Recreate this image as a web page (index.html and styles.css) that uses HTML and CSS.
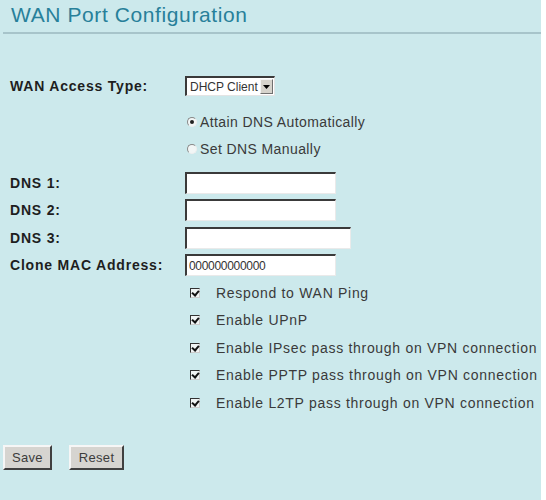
FILE: index.html
```html
<!DOCTYPE html>
<html lang="en">
<head>
    <meta charset="UTF-8">
    <meta name="viewport" content="width=device-width, initial-scale=1.0">
    <title>WAN Port Configuration</title>
    <link rel="stylesheet" href="styles.css">
</head>
<body>

<div class="panel">
    <h1>WAN Port Configuration</h1>

    <form class="wan-form" onsubmit="return false;">
        <div class="row row-type">
            <label class="label">WAN Access Type:</label>
            <div class="select-box">
                <span class="select-text">DHCP Client</span>
                <span class="select-arrow">
                    <svg width="7" height="4" viewBox="0 0 7 4"><path d="M0 0h7L3.5 4z" fill="#000"/></svg>
                </span>
            </div>
        </div>

        <div class="row">
            <span></span>
            <span class="option"><span class="radio checked"></span>Attain DNS Automatically</span>
        </div>
        <div class="row row-last-radio">
            <span></span>
            <span class="option"><span class="radio"></span>Set DNS Manually</span>
        </div>

        <div class="row">
            <label class="label">DNS 1:</label>
            <input class="field" type="text">
        </div>
        <div class="row">
            <label class="label">DNS 2:</label>
            <input class="field" type="text">
        </div>
        <div class="row">
            <label class="label">DNS 3:</label>
            <input class="field wide" type="text">
        </div>
        <div class="row">
            <label class="label">Clone MAC Address:</label>
            <input class="field mac" type="text" value="000000000000">
        </div>

        <div class="row">
            <span></span>
            <span class="check-option"><span class="check"></span>Respond to WAN Ping</span>
        </div>
        <div class="row">
            <span></span>
            <span class="check-option"><span class="check"></span>Enable UPnP</span>
        </div>
        <div class="row">
            <span></span>
            <span class="check-option"><span class="check"></span>Enable IPsec pass through on VPN connection</span>
        </div>
        <div class="row">
            <span></span>
            <span class="check-option"><span class="check"></span>Enable PPTP pass through on VPN connection</span>
        </div>
        <div class="row">
            <span></span>
            <span class="check-option"><span class="check"></span>Enable L2TP pass through on VPN connection</span>
        </div>

        <div class="buttons">
            <button class="btn">Save</button>
            <button class="btn reset">Reset</button>
        </div>
    </form>
</div>

</body>
</html>
```

FILE: styles.css
```css
body {
    margin: 0;
    padding: 0;
    background-color: #ffffff;
    font-family: "Liberation Sans", Arial, sans-serif;
}
.panel {
    width: 541px;
    height: 500px;
    background-color: #cce9ec;
    overflow: hidden;
}
h1 {
    margin: 0 0 0 3px;
    padding: 3px 0 0 8px;
    height: 29px;
    font-size: 21px;
    font-weight: normal;
    letter-spacing: 0.6px;
    color: #27809a;
    border-bottom: 2px solid #a7c4ca;
}
.wan-form {
    padding: 38px 0 0 10px;
}
.row {
    display: grid;
    grid-template-columns: 175px 1fr;
    align-items: center;
    height: 27.5px;
    white-space: nowrap;
}
.row-type {
    height: 28px;
    margin-bottom: 8px;
}
.row-last-radio {
    margin-bottom: 6px;
}
.label {
    font-size: 14px;
    font-weight: bold;
    letter-spacing: 0.8px;
    color: #1e1e1e;
}
.select-box {
    display: flex;
    align-items: center;
    width: 87px;
    height: 17px;
    background: #ffffff;
    border-top: 2px solid #3a3a3a;
    border-left: 2px solid #3a3a3a;
    border-right: 1px solid #e4e4e4;
    border-bottom: 1px solid #e4e4e4;
}
.select-text {
    flex: 1;
    padding-left: 3px;
    font-size: 12px;
    color: #333;
    white-space: nowrap;
}
.select-arrow {
    display: flex;
    align-items: center;
    justify-content: center;
    width: 11px;
    height: 13px;
    margin-right: 1px;
    background: #d6d3cc;
    border: 1px solid;
    border-color: #f4f4f4 #707070 #707070 #f4f4f4;
}
.option {
    display: flex;
    align-items: center;
    font-size: 14px;
    letter-spacing: 0.4px;
    color: #3a3a3a;
}
.radio {
    width: 8px;
    height: 8px;
    margin: 0 3px 0 2px;
    border-radius: 50%;
    border: 1px solid;
    border-color: #888 #eee #eee #888;
    background: #f2f6f6;
    position: relative;
}
.radio.checked::after {
    content: "";
    position: absolute;
    left: 2px;
    top: 2px;
    width: 4px;
    height: 4px;
    border-radius: 50%;
    background: #222;
}
.field {
    box-sizing: border-box;
    width: 151px;
    height: 22px;
    padding: 0 2px;
    margin: 0;
    background: #ffffff;
    border-top: 2px solid #3a3a3a;
    border-left: 2px solid #3a3a3a;
    border-right: 1px solid #eaeaea;
    border-bottom: 1px solid #eaeaea;
    font-family: "Liberation Sans", Arial, sans-serif;
    font-size: 12px;
    color: #333;
}
.field.wide {
    width: 166px;
}
.field.mac {
    letter-spacing: -0.3px;
}
.check-option {
    display: flex;
    align-items: center;
    font-size: 14px;
    letter-spacing: 0.7px;
    color: #3a3a3a;
}
.check {
    position: relative;
    width: 10px;
    height: 10px;
    margin: 0 16px 0 5px;
    background: #f0f4f4;
    border: 1px solid;
    border-color: #333 #ccc #ccc #333;
    box-sizing: border-box;
}
.check::after {
    content: "";
    position: absolute;
    left: 2px;
    top: 0px;
    width: 3px;
    height: 5px;
    border: solid #111;
    border-width: 0 2px 2px 0;
    transform: rotate(40deg);
}
.buttons {
    display: flex;
    gap: 17px;
    margin: 28px 0 0 -7px;
}
.btn {
    height: 25px;
    padding: 0 7px;
    font-family: "Liberation Sans", Arial, sans-serif;
    font-size: 13px;
    letter-spacing: 0.3px;
    color: #3c3c3c;
    background: #d6d4d0;
    border: 2px solid;
    border-color: #f6f6f6 #404040 #404040 #f6f6f6;
}
.btn.reset {
    padding: 0 8px;
}
```
